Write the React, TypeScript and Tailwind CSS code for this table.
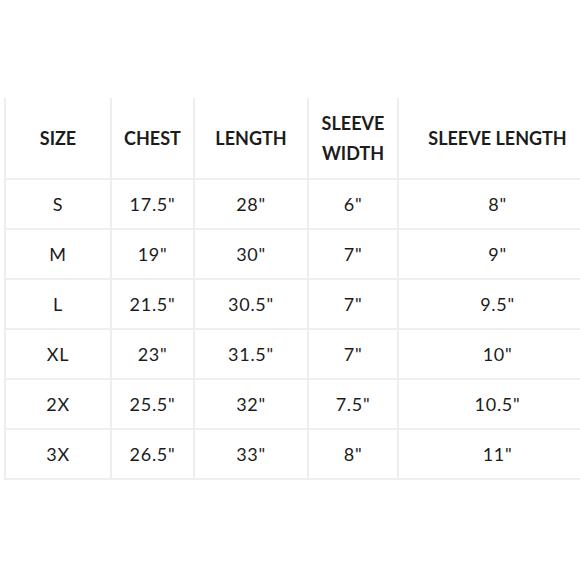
import React from 'react';

const rows = [
  ['S', '17.5"', '28"', '6"', '8"'],
  ['M', '19"', '30"', '7"', '9"'],
  ['L', '21.5"', '30.5"', '7"', '9.5"'],
  ['XL', '23"', '31.5"', '7"', '10"'],
  ['2X', '25.5"', '32"', '7.5"', '10.5"'],
  ['3X', '26.5"', '33"', '8"', '11"'],
];

const widths = ['w-[106px]', 'w-[83px]', 'w-[114px]', 'w-[90px]', 'w-[198px]'];

const App: React.FC = () => {
  return (
    <div className="w-[580px] h-[580px] overflow-hidden bg-white text-[#1c1c1c] font-['Lato','Liberation_Sans',sans-serif]">
      <div className="pt-[98px] pl-[4px]">
        <table className="border-collapse table-fixed w-[591px]">
          <thead>
            <tr className="h-[81px] border-b-2 border-[#eeeeea]">
              {['SIZE', 'CHEST', 'LENGTH', 'SLEEVE WIDTH', 'SLEEVE LENGTH'].map((h, i) => (
                <th
                  key={h}
                  className={`${widths[i]} border-l-2 border-[#eeeeea] text-center font-bold text-[18px] leading-[30px] p-0 align-middle`}
                >
                  {h === 'SLEEVE WIDTH' ? (
                    <>
                      SLEEVE
                      <br />
                      WIDTH
                    </>
                  ) : (
                    h
                  )}
                </th>
              ))}
            </tr>
          </thead>
          <tbody>
            {rows.map((r) => (
              <tr key={r[0]} className="h-[50px] border-b-2 border-[#eeeeea]">
                {r.map((c, i) => (
                  <td
                    key={i}
                    className="border-l-2 border-[#eeeeea] text-center text-[18px] tracking-[0.04em] p-0 align-middle"
                  >
                    {c}
                  </td>
                ))}
              </tr>
            ))}
          </tbody>
        </table>
      </div>
    </div>
  );
};

export default App;
